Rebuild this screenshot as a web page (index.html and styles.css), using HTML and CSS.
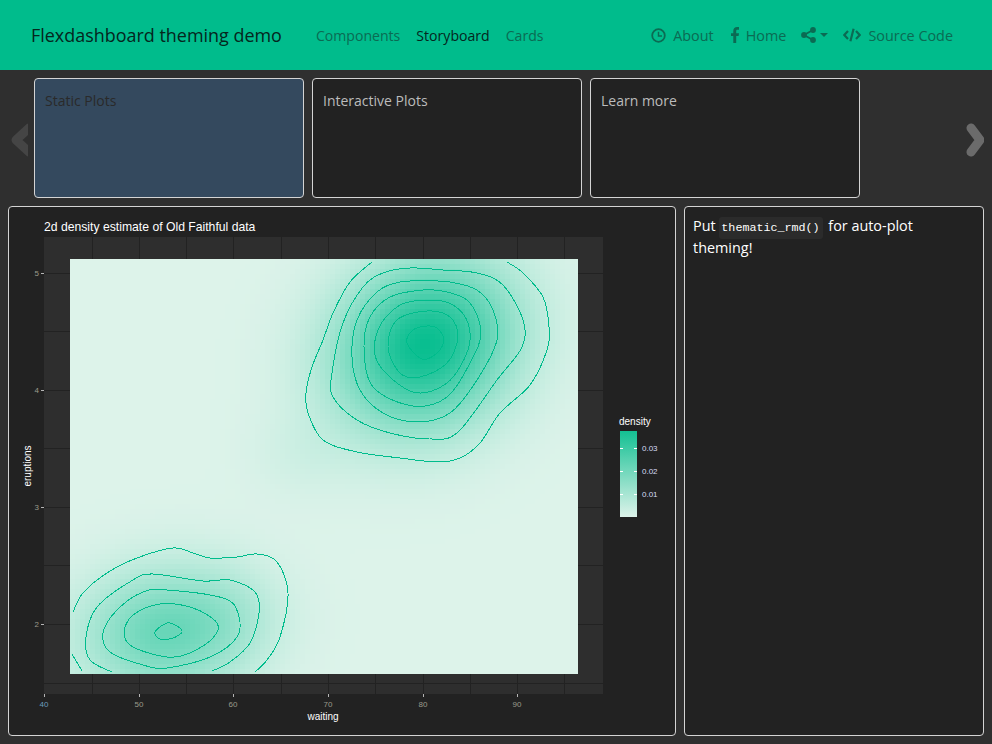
FILE: index.html

```html
<!DOCTYPE html>
<html lang="en">
<head>
    <meta charset="UTF-8">
    <title>Flexdashboard theming demo</title>
    <link rel="stylesheet" href="styles.css">
</head>
<body>
    <nav class="topbar">
        <a class="brand">Flexdashboard theming demo</a>
        <ul class="nav-links">
            <li>Components</li>
            <li class="active">Storyboard</li>
            <li>Cards</li>
        </ul>
        <ul class="nav-links nav-right">
            <li class="about">
                <svg class="icon" width="15" height="15" viewBox="0 0 15 15"><circle cx="7.5" cy="7.5" r="6.3" fill="none" stroke="currentColor" stroke-width="1.8"/><path d="M7.5 3.8V8H11" fill="none" stroke="currentColor" stroke-width="1.5"/></svg>
                About
            </li>
            <li>
                <svg class="icon" width="8" height="16" viewBox="0 0 8 16"><path d="M2.300 16V9H0V6.200h2.300V4.100C2.300 1.500 3.800 0 6.100 0H8v2.700H6.600c-1 0-1.400.5-1.400 1.400v2.100H8L7.600 9H5.200v7z" fill="currentColor"/></svg>
                Home
            </li>
            <li class="share">
                <svg width="15" height="16" viewBox="0 0 15 16"><path d="M12 3 3 8l9 5" fill="none" stroke="currentColor" stroke-width="1.8"/><circle cx="12" cy="3" r="2.9" fill="currentColor"/><circle cx="3" cy="8" r="2.9" fill="currentColor"/><circle cx="12" cy="13" r="2.9" fill="currentColor"/></svg>
                <span class="caret"></span>
            </li>
            <li>
                <svg class="icon" width="18" height="14" viewBox="0 0 18 14"><path d="M5 3 1.300 7 5 11M13 3l3.700 4L13 11M10.600.8 7.400 13.200" fill="none" stroke="currentColor" stroke-width="2.200"/></svg>
                Source Code
            </li>
        </ul>
    </nav>

    <section class="story">
        <svg class="arrow arrow-prev" width="18" height="34" viewBox="0 0 18 34"><polyline points="19,5 6,17 19,29"/></svg>
        <div class="frame frame-current">Static Plots</div>
        <div class="frame">Interactive Plots</div>
        <div class="frame">Learn more</div>
        <svg class="arrow arrow-next" width="18" height="34" viewBox="0 0 18 34"><polyline points="5,5 14,17 5,29"/></svg>
    </section>

    <main class="content">
        <div class="card card-plot">
            <svg id="plot" width="666" height="528" viewBox="9 207 666 528"></svg>
        </div>
        <div class="card card-note">
            <p>Put <code>thematic_rmd()</code> for auto-plot theming!</p>
        </div>
    </main>

    <script>
        const plot = document.getElementById("plot");
        let html = "";

        function gauss(x, y, cx, cy, sx, sy, amp, tilt) {
            const dx = x - cx, dy = y - cy;
            const u = dx + tilt * dy;
            return amp * Math.exp(-(u * u) / (2 * sx * sx) - (dy * dy) / (2 * sy * sy));
        }

        function density(x, y) {
            return gauss(x, y, 425, 345, 60, 58, 0.96, 0.15)
                + gauss(x, y, 165, 632, 58, 44, 0.52, 0.1)
                + gauss(x, y, 235, 615, 35, 35, 0.08, 0)
                + gauss(x, y, 300, 455, 35, 30, 0.05, 0);
        }

        // panel and grid
        html += '<rect class="panel" x="44" y="237" width="559" height="457"/>';
        [92, 186, 281, 375, 470, 564, 139, 233, 328, 423, 517].forEach(x => {
            html += `<line class="grid" x1="${x}" x2="${x}" y1="237" y2="694"/>`;
        });
        [273, 331, 390, 448, 507, 565, 624, 683].forEach(y => {
            html += `<line class="grid" x1="44" x2="603" y1="${y}" y2="${y}"/>`;
        });

        // density raster
        const low = [221, 243, 234], high = [0, 188, 140];
        for (let x = 70; x < 578; x += 5) {
            for (let y = 259; y < 674; y += 5) {
                const v = Math.min(1, density(x + 2.5, y + 2.5));
                const c = low.map((l, i) => Math.round(l + (high[i] - l) * v));
                const w = Math.min(5, 578 - x), h = Math.min(5, 674 - y);
                html += `<rect class="cell" x="${x}" y="${y}" width="${w}" height="${h}" fill="rgb(${c})"/>`;
            }
        }

        // contours, traced as smooth lines
        const contours = [
            { closed: false, pts: [[372,262],[350,282],[333,313],[323,340],[312,367],[306,393],[308,413],[323,440],[357,452],[400,458],[437,462],[460,458],[480,443],[500,413],[530,385],[547,350],[549,327],[543,297],[523,273],[507,262]] },
            { closed: true, pts: [[410,268],[383,273],[363,287],[343,323],[332,373],[333,397],[357,420],[390,433],[430,439],[458,432],[497,380],[522,347],[523,320],[503,285],[477,273],[443,270]] },
            { closed: true, pts: [[430,281],[400,282],[377,292],[357,320],[352,357],[360,390],[383,413],[417,422],[450,413],[477,380],[497,340],[493,310],[477,290],[450,282]] },
            { closed: true, pts: [[423,290],[390,297],[370,317],[364,347],[373,387],[413,406],[447,397],[470,363],[481,333],[470,303],[447,292]] },
            { closed: true, pts: [[430,300],[400,305],[378,330],[378,363],[413,392],[447,383],[468,350],[468,323],[453,305]] },
            { closed: true, pts: [[427,311],[397,320],[388,347],[400,373],[420,377],[447,363],[458,337],[450,317]] },
            { closed: true, pts: [[427,326],[413,330],[407,343],[422,359],[437,353],[444,340],[437,328]] },
            { closed: false, pts: [[73,612],[83,593],[107,573],[137,558],[173,548],[193,553],[210,558],[237,557],[257,554],[277,562],[288,593],[280,637],[267,660],[255,672]] },
            { closed: false, pts: [[72,654],[82,671]] },
            { closed: false, pts: [[112,672],[90,660],[86,637],[97,607],[133,580],[153,574],[203,581],[230,580],[255,592],[259,613],[250,643],[230,662],[212,671]] },
            { closed: true, pts: [[103,633],[117,610],[143,592],[167,590],[223,598],[238,613],[237,637],[210,657],[167,668],[143,665],[110,652]] },
            { closed: true, pts: [[124,633],[133,615],[160,604],[193,608],[217,623],[213,638],[190,653],[167,657],[133,647]] },
            { closed: true, pts: [[155,632],[167,623],[177,626],[182,632],[173,638],[160,639]] }
        ];

        function smooth(pts, closed) {
            const n = pts.length;
            const at = i => closed ? pts[(i + n) % n] : pts[Math.max(0, Math.min(n - 1, i))];
            let d = `M${pts[0]}`;
            for (let i = 0; i < (closed ? n : n - 1); i++) {
                const [p0, p1, p2, p3] = [at(i - 1), at(i), at(i + 1), at(i + 2)];
                const c1 = [p1[0] + (p2[0] - p0[0]) / 6, p1[1] + (p2[1] - p0[1]) / 6];
                const c2 = [p2[0] - (p3[0] - p1[0]) / 6, p2[1] - (p3[1] - p1[1]) / 6];
                d += `C${c1} ${c2} ${p2}`;
            }
            return d + (closed ? "Z" : "");
        }

        contours.forEach(c => {
            html += `<path class="contour" d="${smooth(c.pts, c.closed)}"/>`;
        });

        // axes
        [[273, "5"], [390, "4"], [507, "3"], [624, "2"]].forEach(([y, label]) => {
            html += `<line class="tick" x1="41" x2="44" y1="${y}" y2="${y}"/>`;
            html += `<text class="axis-num" x="39" y="${y + 3}" text-anchor="end">${label}</text>`;
        });
        [[44, "40"], [139, "50"], [233, "60"], [328, "70"], [423, "80"], [517, "90"]].forEach(([x, label], i) => {
            html += `<line class="tick" x1="${x}" x2="${x}" y1="694" y2="697"/>`;
            html += `<text class="axis-num${i === 0 ? " axis-first" : ""}" x="${x}" y="707" text-anchor="middle">${label}</text>`;
        });
        html += '<text class="plot-title" x="44" y="231">2d density estimate of Old Faithful data</text>';
        html += '<text class="axis-title" x="323" y="720" text-anchor="middle">waiting</text>';
        html += '<text class="axis-title" transform="translate(31 466) rotate(-90)" text-anchor="middle">eruptions</text>';

        // legend
        html += '<defs><linearGradient id="legendFill" x1="0" x2="0" y1="0" y2="1"><stop offset="0" stop-color="#14c093"/><stop offset="1" stop-color="#ddf3ea"/></linearGradient></defs>';
        html += '<text class="axis-title" x="619" y="425">density</text>';
        html += '<rect x="620" y="431" width="17" height="86" fill="url(#legendFill)"/>';
        [[448, "0.03"], [471, "0.02"], [494, "0.01"]].forEach(([y, label]) => {
            html += `<line class="legend-tick" x1="620" x2="623" y1="${y}" y2="${y}"/>`;
            html += `<line class="legend-tick" x1="634" x2="637" y1="${y}" y2="${y}"/>`;
            html += `<text class="legend-num" x="642" y="${y + 3}">${label}</text>`;
        });

        plot.innerHTML = html;
    </script>
</body>
</html>
```

FILE: styles.css

```css
body { margin: 0; height: 744px; overflow: hidden; background: #2f2f2f; font-family: "Open Sans", "Noto Sans", sans-serif; color: #fff; }

.topbar { display: flex; align-items: center; height: 70px; padding: 0 39px 0 31px; background: #00bc8c; color: #0b6b53; }
.brand { font-size: 17.95px; color: #05261d; margin-right: 34px; }
.nav-links { display: flex; gap: 16px; list-style: none; margin: 0; padding: 0; font-size: 14.1px; }
.nav-links li { display: flex; align-items: center; }
.nav-links .active { color: #05261d; }
.nav-right { margin-left: auto; gap: 15px; font-size: 14.4px; }
.icon { margin-right: 7px; }
.about { margin-right: 2px; }
.share { gap: 4px; }
.caret { border-top: 4px solid currentColor; border-left: 4px solid transparent; border-right: 4px solid transparent; }

.story { display: flex; align-items: center; gap: 8px; height: 120px; padding: 8px 8px 0 10px; }
.arrow { fill: none; stroke-width: 9; stroke-linecap: round; stroke-linejoin: round; margin-top: 4px; }
.arrow-prev { stroke: #454545; margin-right: -2px; }
.arrow-next { stroke: #6b6b6b; margin-left: auto; }
.frame { box-sizing: border-box; width: 270px; height: 120px; padding: 12px 10px; background: #222; border: 1px solid #d4d4d4; border-radius: 4px; font-size: 14px; color: #bcbcbc; }
.frame-current { background: #34495e; color: #2a2a2a; }

.content { display: flex; gap: 8px; padding: 8px; }
.card { box-sizing: border-box; height: 530px; background: #222; border: 1px solid #d4d4d4; border-radius: 4px; }
.card-plot { width: 668px; }
.card-plot svg { display: block; }
.card-note { width: 300px; padding: 8px; font-size: 14.4px; line-height: 22px; }
.card-note p { margin: 0; }
code { font-family: "Liberation Mono", monospace; font-size: 11.7px; line-height: 1; background: #2b2b2b; padding: 4px 3px 4px 2px; margin-right: 2px; border-radius: 3px; }

.panel { fill: #2e2e2e; }
.grid { stroke: #222; stroke-width: 1; shape-rendering: crispEdges; }
.cell { shape-rendering: crispEdges; }
.contour { fill: none; stroke: #00bc8c; stroke-width: 1; shape-rendering: crispEdges; }
.tick { stroke: #b5b5b5; stroke-width: 1; shape-rendering: crispEdges; }
.legend-tick { stroke: #fff; stroke-width: 1; shape-rendering: crispEdges; }
.plot-title { font-family: "Liberation Sans", Arial, sans-serif; font-size: 12.2px; fill: #fff; }
.axis-title { font-family: "Liberation Sans", Arial, sans-serif; font-size: 10px; fill: #fff; }
.axis-num { font-family: "Liberation Sans", Arial, sans-serif; font-size: 8px; fill: #9b9b8c; }
.axis-first { fill: #6c9cbc; }
.legend-num { font-family: "Liberation Sans", Arial, sans-serif; font-size: 8px; fill: #d6dcf5; }
```
